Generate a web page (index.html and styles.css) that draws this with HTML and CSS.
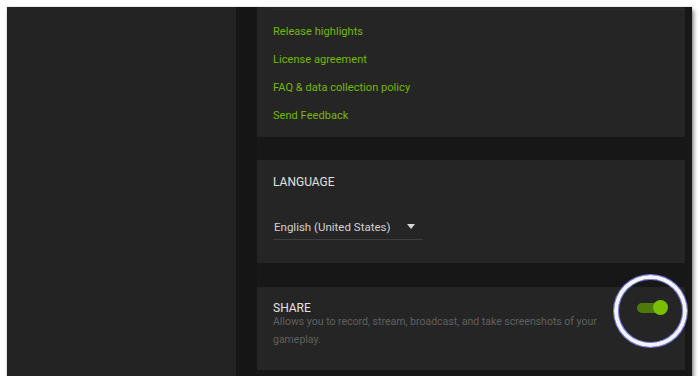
FILE: index.html
```html
<!DOCTYPE html>
<html>
<head>
<meta charset="utf-8">
<link rel="stylesheet" href="styles.css">
</head>
<body>
<div class="frame">
  <aside class="sidebar"></aside>
  <div class="gutter"></div>
  <main class="content">
    <section class="card card-about">
      <div class="divider"></div>
      <a class="link">Release highlights</a>
      <a class="link">License agreement</a>
      <a class="link">FAQ &amp; data collection policy</a>
      <a class="link">Send Feedback</a>
    </section>
    <section class="card card-lang">
      <h2 class="heading">LANGUAGE</h2>
      <div class="select">
        <span class="select-text">English (United States)</span>
        <svg class="caret" width="8" height="5" viewBox="0 0 8 5"><path d="M0 0H8L4 5Z" fill="#d6d6d6"/></svg>
      </div>
    </section>
    <section class="card card-share">
      <div class="share-text">
        <h2 class="heading">SHARE</h2>
        <p class="desc">Allows you to record, stream, broadcast, and take screenshots of your gameplay.</p>
      </div>
      <div class="toggle"><span class="knob"></span></div>
    </section>
  </main>
  <div class="ring"></div>
</div>
</body>
</html>
```
FILE: styles.css
```css
html, body {
  margin: 0;
  padding: 0;
  background: #ffffff;
}
body {
  font-family: Roboto, "Liberation Sans", sans-serif;
}
.frame {
  position: relative;
  margin: 7px 0 0 7px;
  width: 685px;
  height: 369px;
  display: flex;
  background: #171717;
  box-shadow: 0 0 1px rgba(0,0,0,0.35), 2px 3px 4px rgba(0,0,0,0.45);
}
.sidebar {
  width: 229px;
  background: #232323;
}
.gutter {
  width: 21px;
  background: #151515;
}
.content {
  width: 428px;
  display: flex;
  flex-direction: column;
}
.card {
  background: #252525;
  box-sizing: border-box;
  padding-left: 16px;
}
.card-about {
  height: 130px;
  padding-top: 11px;
  display: flex;
  flex-direction: column;
  position: relative;
}
.divider {
  position: absolute;
  top: 2px;
  left: 16px;
  right: 0;
  height: 1px;
  background: #2e2e2e;
}
.link {
  color: #76b900;
  font-size: 11px;
  line-height: 28px;
  font-weight: 400;
  letter-spacing: 0.05px;
}
.card-lang {
  margin-top: 23px;
  height: 103px;
  padding-top: 15px;
}
.heading {
  margin: 0;
  font-size: 12px;
  font-weight: 400;
  line-height: 14px;
  color: #e2e2e2;
}
.select {
  margin-top: 25px;
  width: 150px;
  height: 26px;
  box-sizing: border-box;
  border-bottom: 1px solid #3e3e3e;
  display: flex;
  align-items: center;
  padding-left: 1px;
}
.select-text {
  color: #d2d2d2;
  font-size: 11.5px;
}
.caret {
  margin-left: 17px;
}
.card-share {
  margin-top: 24px;
  height: 83px;
  padding-top: 14px;
  padding-right: 18px;
  display: flex;
  justify-content: space-between;
}
.share-text {
  width: 340px;
}
.desc {
  margin: -2px 0 0;
  font-size: 10.5px;
  line-height: 18px;
  color: #606060;
}
.toggle {
  position: relative;
  margin-top: 2px;
  width: 30px;
  height: 10px;
  border-radius: 5px;
  background: #4c7a0c;
}
.knob {
  position: absolute;
  right: -1px;
  top: -3px;
  width: 15px;
  height: 15px;
  border-radius: 50%;
  background: #7ac000;
}
.ring {
  position: absolute;
  left: 607px;
  top: 268px;
  width: 65px;
  height: 64px;
  border-radius: 50%;
  border: 4px solid #f4f4ff;
  box-shadow: 0 0 0 1px #7878ee, inset 0 0 0 1px #7878ee;
}
```
